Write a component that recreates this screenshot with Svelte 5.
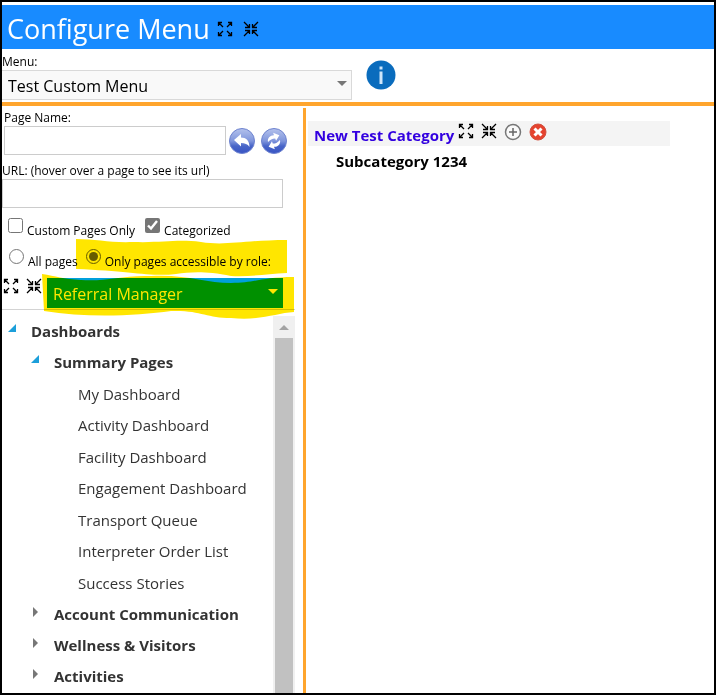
<script>
    let menu = $state('Test Custom Menu');
    let role = $state('Referral Manager');
    let pageName = $state('');
    let url = $state('');
    let customOnly = $state(false);
    let categorized = $state(true);
    let scope = $state('role');

    const summaryPages = [
        'My Dashboard',
        'Activity Dashboard',
        'Facility Dashboard',
        'Engagement Dashboard',
        'Transport Queue',
        'Interpreter Order List',
        'Success Stories'
    ];
    const closedGroups = ['Account Communication', 'Wellness & Visitors', 'Activities'];
</script>

{#snippet expandIcon()}
    <svg class="arrows" viewBox="0 0 16 16" aria-hidden="true">
        <path d="M6 6 1.500 1.500M10 6l4.500-4.500M6 10l-4.500 4.500M10 10l4.500 4.500M1.500 5V1.500H5M11 1.500h3.500V5M1.500 11v3.500H5M11 14.500h3.500V11" />
    </svg>
{/snippet}

{#snippet collapseIcon()}
    <svg class="arrows" viewBox="0 0 16 16" aria-hidden="true">
        <path d="M1 1l5 5M15 1l-5 5M1 15l5-5M15 15l-5-5M6.500 3v3.500H2M9.500 3v3.500H14M2 9.500h4.500V13M14 9.500H9.500V13" />
    </svg>
{/snippet}

<div class="page">
    <header>
        <h1>Configure Menu</h1>
        <button class="icon" aria-label="Expand all">{@render expandIcon()}</button>
        <button class="icon" aria-label="Collapse all">{@render collapseIcon()}</button>
    </header>

    <section class="menu-bar">
        <div class="menu-field">
            <label for="menu">Menu:</label>
            <div class="drop">
                <select id="menu" bind:value={menu}>
                    <option>Test Custom Menu</option>
                </select>
                <span class="caret"></span>
            </div>
        </div>
        <button class="icon info" aria-label="Information">
            <svg viewBox="0 0 30 30" width="30" height="30">
                <circle cx="15" cy="15" r="14.500" fill="#0a6cbd" />
                <path d="M13.500 6.500h3v3h-3zM13.500 11.500h3V24h-3z" fill="#cfe6fa" />
            </svg>
        </button>
    </section>

    <main>
        <aside>
            <form onsubmit={(e) => e.preventDefault()}>
                <label class="name-label" for="page-name">Page Name:</label>
                <div class="name-row">
                    <input id="page-name" type="text" bind:value={pageName} />
                    <button class="icon" type="button" aria-label="Undo">
                        <svg viewBox="0 0 26 26" width="26" height="26">
                            <defs>
                                <linearGradient id="ball" x1="0" y1="0" x2="0" y2="1">
                                    <stop offset="0" stop-color="#b4c2ec" />
                                    <stop offset="0.500" stop-color="#7f95dc" />
                                    <stop offset="0.700" stop-color="#4865c8" />
                                    <stop offset="1" stop-color="#3854c4" />
                                </linearGradient>
                            </defs>
                            <circle cx="13" cy="13" r="12.500" fill="url(#ball)" stroke="#6e83cf" />
                            <path d="M5 12l7-6v3.500c5 0 8.500 3 8.500 9.500-2-3-4.500-4-8.500-4v3.500z" fill="#fff" />
                        </svg>
                    </button>
                    <button class="icon" type="button" aria-label="Refresh">
                        <svg viewBox="0 0 26 26" width="26" height="26">
                            <circle cx="13" cy="13" r="12.500" fill="url(#ball)" stroke="#6e83cf" />
                            <g fill="#fff" transform="rotate(-20 13 13)">
                                <path d="M7 12c.5-4 4.500-6 8-4.500V5l5 4.500-5 4V11c-3-1-5-.5-8 1z" />
                                <path d="M19 14c-.5 4-4.500 6-8 4.500V21l-5-4.500 5-4V15c3 1 5 .5 8-1z" />
                            </g>
                        </svg>
                    </button>
                </div>
                <label class="url-label" for="url">URL: (hover over a page to see its url)</label>
                <input id="url" type="text" bind:value={url} />

                <div class="choices">
                    <label><input type="checkbox" bind:checked={customOnly} /><span>Custom Pages Only</span></label>
                    <label><input type="checkbox" bind:checked={categorized} /><span>Categorized</span></label>
                </div>
                <div class="choices radios">
                    <label><input type="radio" value="all" bind:group={scope} /><span>All pages</span></label>
                    <label><input type="radio" value="role" bind:group={scope} /><span>Only pages accessible by role:</span></label>
                </div>
                <div class="role-row">
                    <button class="icon" type="button" aria-label="Expand tree">{@render expandIcon()}</button>
                    <button class="icon" type="button" aria-label="Collapse tree">{@render collapseIcon()}</button>
                    <div class="drop role">
                        <select aria-label="Role" bind:value={role}>
                            <option>Referral Manager</option>
                        </select>
                        <span class="caret"></span>
                    </div>
                </div>
                <!-- marker strokes over the role filter -->
                <svg class="marker" viewBox="0 0 254 82" aria-hidden="true">
                    <path d="M35 1C55 1 70 5 92 4 122 5 135 1 160 4 185 8 205 2 246 2V35C225 36 210 39 190 38 165 33 150 34 135 36 110 39 90 33 35 31Z" />
                    <path d="M1 36C15 38 22 41 40 42 65 44 80 37 110 38 145 36 165 45 190 45 215 45 220 39 253 39V74C235 75 220 83 190 80 165 80 160 72 130 73 95 78 45 80 3 73Z" />
                </svg>
            </form>

            <div class="tree-box">
                <ul class="tree">
                    <li>
                        <div class="node"><span class="open"></span><b>Dashboards</b></div>
                        <ul>
                            <li>
                                <div class="node"><span class="open"></span><b>Summary Pages</b></div>
                                <ul class="leaves">
                                    {#each summaryPages as page}
                                        <li>{page}</li>
                                    {/each}
                                </ul>
                            </li>
                            {#each closedGroups as group}
                                <li><div class="node"><span class="closed"></span><b>{group}</b></div></li>
                            {/each}
                        </ul>
                    </li>
                </ul>
                <div class="scrollbar">
                    <span class="up"></span>
                    <div class="thumb"></div>
                </div>
            </div>
        </aside>

        <section class="result">
            <div class="category">
                <a href="#category">New Test Category</a>
                <button class="icon" aria-label="Expand category">{@render expandIcon()}</button>
                <button class="icon" aria-label="Collapse category">{@render collapseIcon()}</button>
                <button class="icon" aria-label="Add">
                    <svg viewBox="0 0 18 18" width="18" height="18">
                        <circle cx="9" cy="9" r="7.500" fill="#fafafa" stroke="#777" stroke-width="1.500" />
                        <path d="M9 5v8M5 9h8" stroke="#666" stroke-width="1.500" />
                    </svg>
                </button>
                <button class="icon" aria-label="Delete">
                    <svg viewBox="0 0 18 18" width="18" height="18">
                        <circle cx="9" cy="9" r="8" fill="#e5432f" stroke="#d2503f" />
                        <path d="M5.500 5.500l7 7M12.500 5.500l-7 7" stroke="#fff" stroke-width="3" />
                    </svg>
                </button>
            </div>
            <div class="subcategory">Subcategory 1234</div>
        </section>
    </main>
</div>

<style>
    :global(body) {
        margin: 0;
    }

    .page {
        box-sizing: border-box;
        height: 100vh;
        display: flex;
        flex-direction: column;
        border: 2px solid #000;
        padding-top: 3px;
        background: #fff;
        color: #000;
        font-family: "Open Sans", "Noto Sans", sans-serif;
        font-size: 15px;
        overflow: hidden;
    }

    header {
        display: flex;
        align-items: center;
        gap: 10px;
        box-sizing: border-box;
        height: 44px;
        flex: none;
        padding: 4px 0 0 5px;
        background: #188bff;
    }

    h1 {
        margin: 0 -3px 0 0;
        color: #fff;
        font-size: 27px;
        font-weight: 400;
        line-height: 40px;
    }

    .icon {
        display: flex;
        padding: 0;
        border: 0;
        background: none;
        cursor: pointer;
    }

    .arrows {
        width: 16px;
        height: 16px;
        fill: none;
        stroke: #000;
        stroke-width: 1.3;
    }

    .menu-bar {
        display: flex;
        flex: none;
        gap: 14px;
        height: 53px;
        border-bottom: 4px solid #ffa52d;
    }

    .menu-field {
        width: 350px;
        padding-top: 5px;
    }

    label {
        display: block;
        font-size: 12px;
        line-height: 16px;
    }

    .drop {
        position: relative;
    }

    select {
        appearance: none;
        display: block;
        box-sizing: border-box;
        width: 100%;
        height: 30px;
        margin: 0;
        padding: 1px 24px 0 6px;
        border: 1px solid #d9d9d9;
        border-left: 0;
        border-radius: 0;
        background: #f9f9f9;
        color: #000;
        font: 16px/28px "Open Sans", "Noto Sans", sans-serif;
    }

    .caret {
        position: absolute;
        top: 11px;
        right: 5px;
        border: 5px solid transparent;
        border-top-color: #777;
        border-bottom: 0;
        pointer-events: none;
    }

    .info {
        align-self: flex-start;
        padding-top: 11px;
    }

    main {
        display: flex;
        flex: 1;
        min-height: 0;
        padding-top: 2px;
    }

    aside {
        display: flex;
        flex-direction: column;
        flex: none;
        width: 301px;
        border-right: 3px solid #ffa52d;
    }

    form {
        position: relative;
        height: 201px;
        flex: none;
        margin-right: 8px;
        border-bottom: 1px solid #d3d3d3;
    }

    input[type="text"] {
        box-sizing: border-box;
        height: 29px;
        margin: 0;
        border: 1px solid #ccc;
        padding: 0 4px;
        font: inherit;
    }

    .name-label {
        padding: 2px 0 0 2px;
    }

    .name-row {
        display: flex;
        align-items: center;
        gap: 6px;
        padding-left: 2px;
    }

    #page-name {
        width: 222px;
        margin-right: -3px;
    }

    .url-label {
        padding-top: 8px;
    }

    #url {
        display: block;
        width: 281px;
    }

    .choices {
        display: flex;
        gap: 10px;
        padding: 10px 0 0 6px;
    }

    .choices label {
        display: flex;
        gap: 4px;
    }

    .choices span {
        padding-top: 5px;
    }

    .choices input {
        width: 15px;
        height: 15px;
        margin: 0;
        accent-color: #767676;
    }

    .radios {
        gap: 8px;
        padding-left: 7px;
    }

    .radios input {
        accent-color: #666;
    }

    .role-row {
        display: flex;
        gap: 7px;
        padding: 8px 12px 0 1px;
    }

    .role-row .icon {
        align-self: flex-start;
    }

    .role {
        flex: 1;
        margin: 0 0 0 -2px;
    }

    .role select {
        border: 0;
        background: #00a0dc;
        color: #fff;
    }

    .role .caret {
        border-top-color: #fff;
    }

    .marker {
        position: absolute;
        top: 130px;
        left: 39px;
        width: 254px;
        height: 82px;
        fill: #ffe600;
        mix-blend-mode: multiply;
        pointer-events: none;
    }

    .tree-box {
        display: flex;
        flex: 1;
        min-height: 0;
        padding: 6px 8px 0 0;
    }

    ul {
        list-style: none;
        margin: 0;
        padding: 0;
    }

    .tree {
        flex: 1;
        overflow: hidden;
        color: #333;
        font-size: 15px;
        line-height: 31px;
        white-space: nowrap;
    }

    .node {
        display: flex;
        padding-left: 6px;
    }

    .node b {
        font-weight: 700;
    }

    .tree ul {
        padding-left: 23px;
    }

    .tree .leaves {
        padding-left: 53px;
    }

    .leaves li:nth-child(odd) {
        line-height: 32px;
    }

    .open {
        width: 8px;
        height: 8px;
        margin: 8px 15px 0 0;
        background: #1c9fda;
        clip-path: polygon(100% 0, 100% 100%, 0 100%);
    }

    .closed {
        width: 5px;
        height: 10px;
        margin: 8px 16px 0 2px;
        background: #777;
        clip-path: polygon(0 0, 100% 50%, 0 100%);
    }

    .scrollbar {
        display: flex;
        flex-direction: column;
        align-items: center;
        width: 22px;
        background: #f0f0f0;
    }

    .up {
        margin: 9px 0 8px;
        border: 5px solid transparent;
        border-top: 0;
        border-bottom-color: #a3a3a3;
    }

    .thumb {
        flex: 1;
        width: 18px;
        background: #c1c1c1;
    }

    .result {
        flex: 1;
        padding: 13px 44px 0 2px;
        font-weight: 700;
    }

    .category {
        display: flex;
        gap: 7px;
        height: 25px;
        padding-left: 6px;
        background: #f4f4f4;
        line-height: 28px;
    }

    .category a {
        margin-right: -3px;
        color: #3200e0;
        text-decoration: none;
        white-space: nowrap;
    }

    .category .icon {
        align-self: flex-start;
        padding-top: 2px;
    }

    .subcategory {
        padding: 3px 0 0 28px;
        line-height: 24px;
    }
</style>
